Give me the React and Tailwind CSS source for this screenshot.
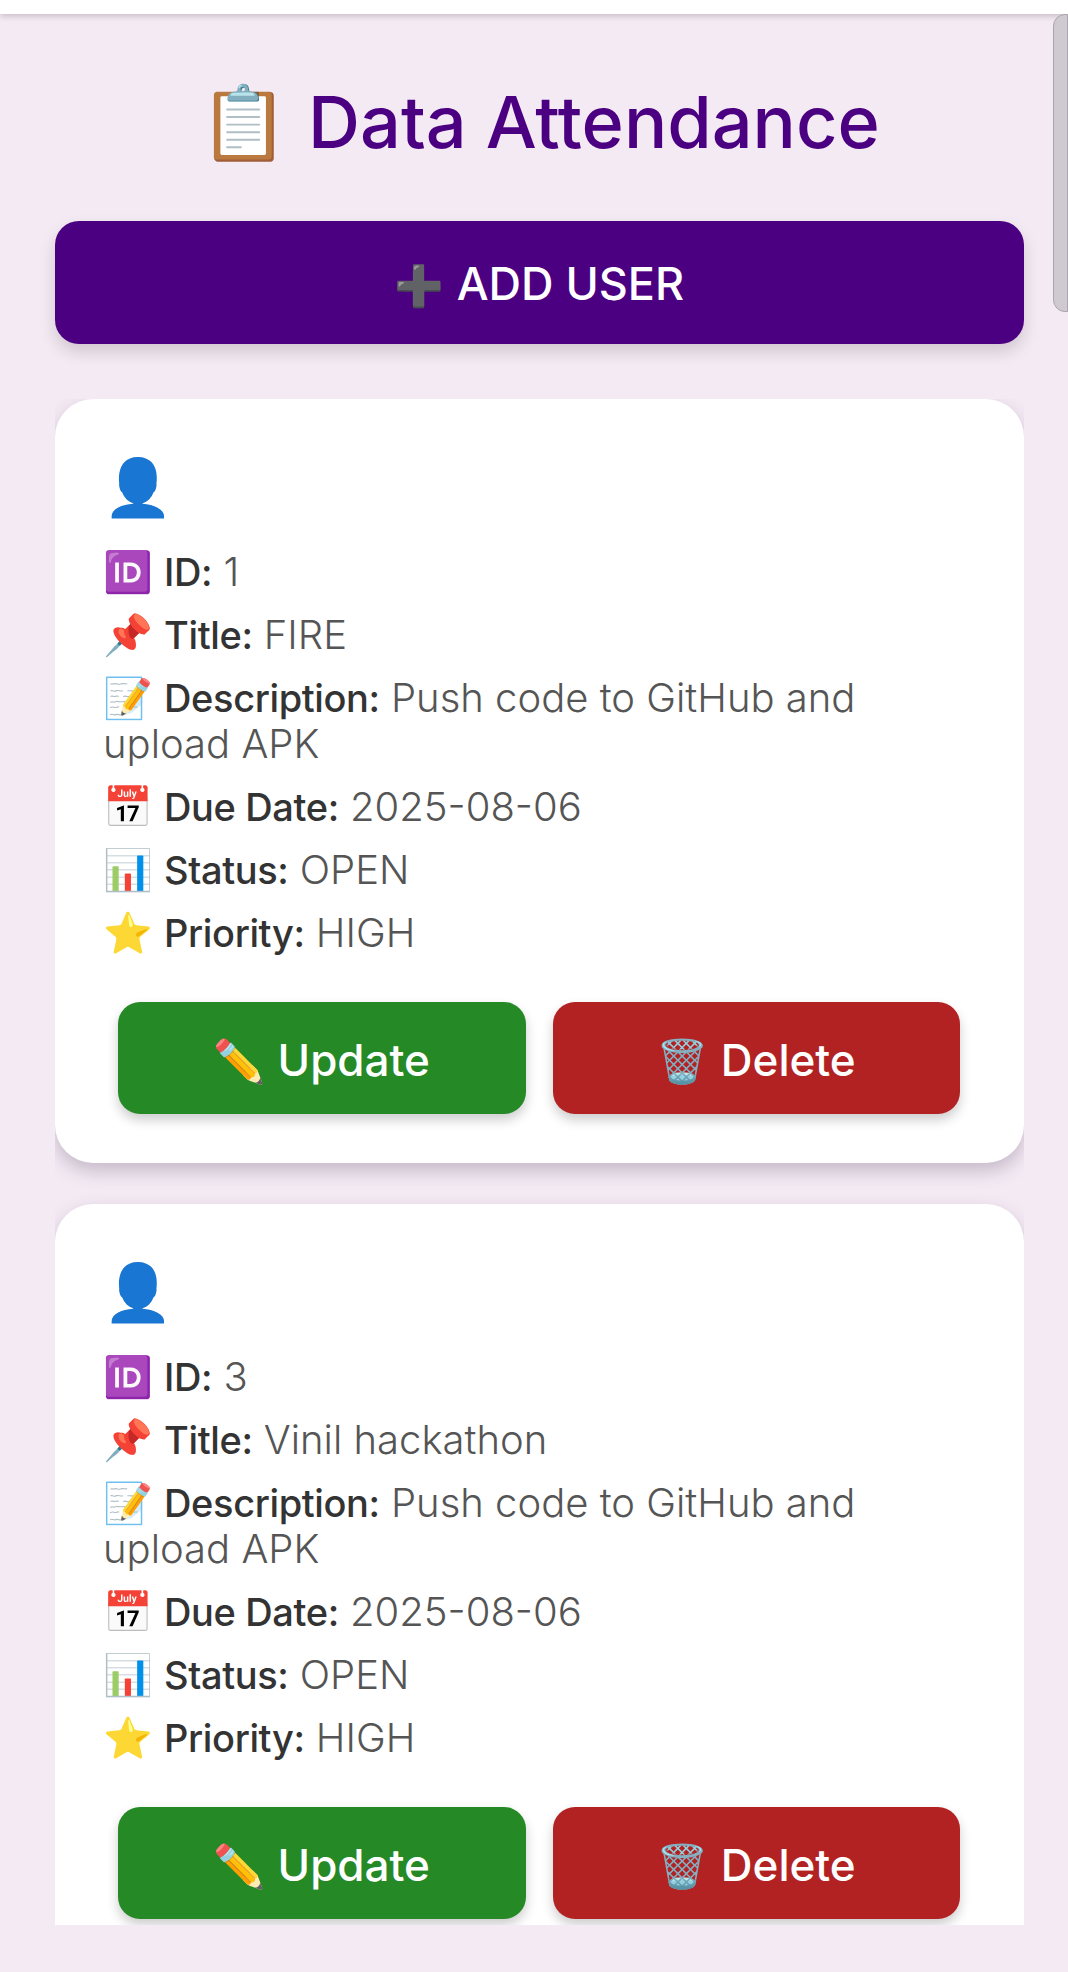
const font = { fontFamily: "Inter, 'Noto Color Emoji', 'Noto Sans', sans-serif" };

function Row({ icon, label, value }) {
  return (
    <p className="mb-[17px] text-[40px] font-light leading-[46px] text-[#555555]">
      <span className="font-normal leading-none">{icon} </span>
      <strong className="text-[38px] font-medium leading-none tracking-[-0.01em] text-[#333333]">{label}</strong> <span className="leading-none">{value}</span>
    </p>
  );
}

function ActionButton({ icon, label, color }) {
  return (
    <button className={`h-[112px] flex-1 rounded-[22px] pt-[3px] text-[44px] font-medium text-white shadow-[0_6px_12px_rgba(0,0,0,0.2)] ${color}`}>
      <span className="text-[42px]">{icon}</span> {label}
    </button>
  );
}

function Card({ id, title }) {
  return (
    <div className="mb-[41px] rounded-[38px] bg-white pl-[48px] pr-[50px] pt-[53px] pb-[49px] shadow-[0_8px_18px_rgba(60,40,70,0.25)]">
      <div className="mb-[27px] text-[56px] leading-[70px]">👤</div>
      <Row icon="🆔" label="ID:" value={id} />
      <Row icon="📌" label="Title:" value={title} />
      <Row icon="📝" label="Description:" value="Push code to GitHub and upload APK" />
      <Row icon="📅" label="Due Date:" value="2025-08-06" />
      <Row icon="📊" label="Status:" value="OPEN" />
      <Row icon="⭐" label="Priority:" value="HIGH" />
      <div className="mt-[46px] flex gap-[27px] pl-[15px] pr-[14px]">
        <ActionButton icon="✏️" label="Update" color="bg-[#258926]" />
        <ActionButton icon="🗑️" label="Delete" color="bg-[#b22222]" />
      </div>
    </div>
  );
}

export default function App() {
  return (
    <div style={font} className="relative h-[1972px] w-[1068px] overflow-hidden bg-[#f4eaf4]">
      <div className="h-[14px] bg-white shadow-[0_2px_6px_rgba(0,0,0,0.2)]" />
      <div className="absolute right-0 top-[14px] h-[298px] w-[15px] rounded-l-[12px] border border-[#aaa5ae] bg-[#cfc9d1]" />
      <div className="mx-[55px] flex h-[1911px] w-[969px] flex-col">
        <h1 className="pt-[64px] pb-[56px] text-center text-[72px] font-medium leading-[87px] text-[#4b0082]">📋 Data Attendance</h1>
        <button className="mb-[55px] h-[123px] w-full shrink-0 rounded-[24px] bg-[#4b0082] pt-[2px] text-[45px] font-medium text-white shadow-[0_8px_16px_rgba(0,0,0,0.15)]">
          <span className="text-[40px]">➕</span> ADD USER
        </button>
        <div className="w-full flex-1 overflow-hidden">
          <Card id="1" title="FIRE" />
          <Card id="3" title="Vinil hackathon" />
        </div>
      </div>
    </div>
  );
}
